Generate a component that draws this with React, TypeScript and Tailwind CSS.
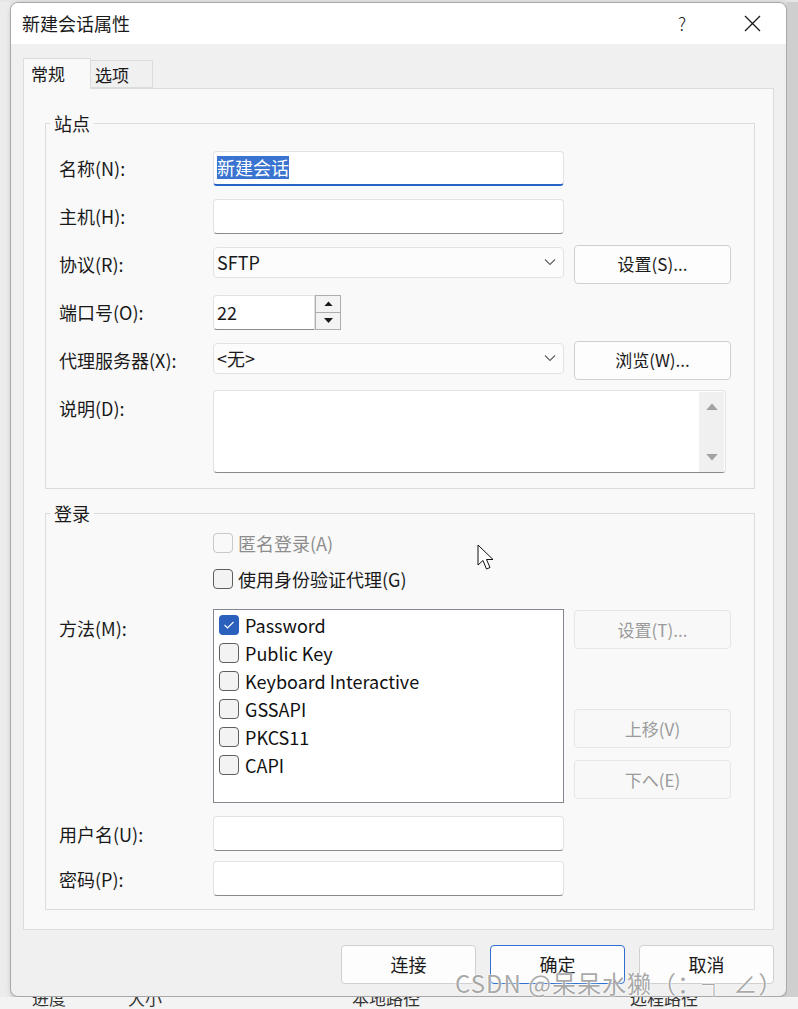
import type { ReactNode } from 'react'

// shared styles for the Win11-ish controls
const textBox = 'h-[35px] rounded-[4px] border border-[#e2e2e2] border-b-[#8a8a8a] bg-white'
const pushBtn = 'flex h-[39px] w-[157px] items-center justify-center rounded-[4px] border border-[#d0d0d0] bg-[#fdfdfd] text-[17px] text-[#1a1a1a]'
const pushBtnOff = 'flex h-[39px] w-[157px] items-center justify-center rounded-[4px] border border-[#e6e6e6] bg-[#f8f8f8] text-[17px] text-[#9a9a9a]'
const dlgBtn = 'flex h-[39px] w-[135px] items-center justify-center rounded-[4px] bg-[#fdfdfd] text-[18px]'

function Label({ children, className = '' }: { children: ReactNode; className?: string }) {
  return <div className={`w-[154px] shrink-0 text-[18px] leading-[24px] text-[#1a1a1a] ${className}`}>{children}</div>
}

function Row({ label, children }: { label: string; children: ReactNode }) {
  return (
    <div className="flex h-[48px] items-center">
      <Label>{label}</Label>
      {children}
    </div>
  )
}

function Chevron() {
  return (
    <svg width="12" height="8" viewBox="0 0 12 8" className="shrink-0">
      <polyline points="1,1.5 6,6.5 11,1.5" fill="none" stroke="#5f5f5f" strokeWidth="1.1" />
    </svg>
  )
}

function Combo({ value }: { value: string }) {
  return (
    <div className="mb-[4px] flex h-[31px] w-[351px] items-center justify-between rounded-[4px] border border-[#e2e2e2] bg-[#fcfcfc] pl-[3px] pr-[7px] text-[18px] text-[#1a1a1a]">
      <span>{value}</span>
      <Chevron />
    </div>
  )
}

function Tri({ up, color = '#1a1a1a', w = 9 }: { up?: boolean; color?: string; w?: number }) {
  return (
    <svg width={w} height={w / 2 + 1} viewBox="0 0 10 6">
      <polygon points={up ? '0,6 5,0.5 10,6' : '0,0 5,5.5 10,0'} fill={color} />
    </svg>
  )
}

function CheckBox({ checked, disabled }: { checked?: boolean; disabled?: boolean }) {
  if (checked) {
    return (
      <div className="flex h-[20px] w-[20px] shrink-0 items-center justify-center rounded-[4px] bg-[#2b60bd]">
        <svg width="12" height="10" viewBox="0 0 12 10">
          <polyline points="1.5,5 4.5,8 10.5,2" fill="none" stroke="#fff" strokeWidth="1.1" />
        </svg>
      </div>
    )
  }
  return (
    <div
      className={
        disabled
          ? 'h-[20px] w-[20px] shrink-0 rounded-[4px] border border-[#c9c9c9] bg-[#f9f9f9]'
          : 'h-[20px] w-[20px] shrink-0 rounded-[4px] border border-[#5e5e5e] bg-[#f3f3f3]'
      }
    />
  )
}

const METHODS = [
  { name: 'Password', checked: true },
  { name: 'Public Key' },
  { name: 'Keyboard Interactive' },
  { name: 'GSSAPI' },
  { name: 'PKCS11' },
  { name: 'CAPI' },
]

export default function App() {
  return (
    <div className="relative flex h-[1009px] w-[798px] flex-col overflow-hidden bg-[#e6e6e6] font-['Noto_Sans_CJK_SC','Noto_Sans',sans-serif] text-[#1a1a1a]">
      <div className="h-[2px] shrink-0" />
      <div className="flex shrink-0">
        <div className="w-[10px] shrink-0 bg-[#ececec]" />

        {/* dialog */}
        <div className="flex h-[995px] w-[777px] shrink-0 flex-col overflow-hidden rounded-[8px] border border-[#a8a8a8] bg-[#f0f0f0] shadow-[2px_2px_6px_rgba(0,0,0,0.25)]">
          <div className="flex h-[41px] shrink-0 items-center bg-white pl-[11px]">
            <span className="flex-1 text-[18px] text-[#1a1a1a]">新建会话属性</span>
            <div className="flex w-[46px] justify-center text-[18px] font-light text-[#2a2a2a]">?</div>
            <div className="ml-[24px] mr-[11px] flex w-[46px] justify-center">
              <svg width="17" height="17" viewBox="0 0 17 17">
                <path d="M1 1 L16 16 M16 1 L1 16" stroke="#1a1a1a" strokeWidth="1.3" />
              </svg>
            </div>
          </div>

          <div className="flex flex-1 flex-col px-[12px] pt-[14px]">
            {/* tabs */}
            <div className="flex items-end">
              <div className="relative z-10 -mb-px h-[31px] w-[68px] border border-b-0 border-[#dcdcdc] bg-[#f9f9f9] pl-[7px] pt-[2px] text-[17px] leading-[26px]">
                常规
              </div>
              <div className="h-[28px] w-[62px] border border-l-0 border-[#dcdcdc] bg-[#f0f0f0] pl-[4px] text-[17px] leading-[27px]">
                选项
              </div>
            </div>

            {/* tab panel */}
            <div className="flex h-[842px] flex-col gap-[12px] border border-[#dcdcdc] bg-[#f9f9f9] pl-[21px] pr-[18px] pt-[22px]">
              <fieldset className="border border-[#dcdcdc] pb-[15px] pl-[13px]">
                <legend className="-ml-[9px] px-[4px] text-[18px] leading-[24px]">站点</legend>
                <div className="pt-[9px]">
                  <Row label="名称(N):">
                    <div className={`${textBox} flex w-[351px] items-center border-b-2 border-b-[#2664c8] pl-[3px]`}>
                      <span className="bg-[#3a74d0] text-[18px] leading-[23px] text-white">新建会话</span>
                    </div>
                  </Row>
                  <Row label="主机(H):">
                    <div className={`${textBox} w-[351px]`} />
                  </Row>
                  <Row label="协议(R):">
                    <Combo value="SFTP" />
                    <div className={`${pushBtn} ml-[10px]`}>设置(S)...</div>
                  </Row>
                  <Row label="端口号(O):">
                    <div className={`${textBox} flex w-[102px] items-center rounded-r-none pl-[3px] text-[18px]`}>22</div>
                    <div className="flex h-[35px] w-[26px] flex-col border border-[#adadad] bg-[#ececec]">
                      <div className="flex flex-1 items-center justify-center border-b border-[#adadad] bg-[#f3f3f3]">
                        <Tri up />
                      </div>
                      <div className="flex flex-1 items-center justify-center bg-[#f3f3f3]">
                        <Tri />
                      </div>
                    </div>
                  </Row>
                  <Row label="代理服务器(X):">
                    <Combo value="<无>" />
                    <div className={`${pushBtn} ml-[10px]`}>浏览(W)...</div>
                  </Row>
                  <div className="mt-[6px] flex">
                    <Label className="mt-[6px]">说明(D):</Label>
                    <div className={`${textBox} flex h-[83px] w-[513px] justify-end pr-[1px] pt-[1px]`}>
                      <div className="flex h-[80px] w-[25px] flex-col items-center justify-between bg-[#f0f0f0] py-[11px]">
                        <Tri up color="#a3a3a3" w={12} />
                        <Tri color="#a3a3a3" w={12} />
                      </div>
                    </div>
                  </div>
                </div>
              </fieldset>

              <fieldset className="border border-[#dcdcdc] pb-[13px] pl-[13px]">
                <legend className="-ml-[9px] px-[4px] text-[18px] leading-[24px]">登录</legend>
                <div className="flex h-[36px] items-center pl-[154px]">
                  <CheckBox disabled />
                  <span className="ml-[5px] text-[18px] text-[#8d8d8d]">匿名登录(A)</span>
                </div>
                <div className="flex h-[36px] items-center pl-[154px]">
                  <CheckBox />
                  <span className="ml-[5px] text-[18px]">使用身份验证代理(G)</span>
                </div>

                <div className="mt-[12px] flex">
                  <Label className="mt-[7px]">方法(M):</Label>
                  <div className="flex h-[194px] w-[351px] flex-col border border-[#828790] bg-white pl-[5px] pt-[1px]">
                    {METHODS.map((m) => (
                      <div key={m.name} className="flex h-[28px] items-center gap-[6px]">
                        <CheckBox checked={m.checked} />
                        <span className="text-[18px] leading-[24px] text-[#111]">{m.name}</span>
                      </div>
                    ))}
                  </div>
                  <div className="ml-[10px] flex flex-col pt-[1px]">
                    <div className={pushBtnOff}>设置(T)...</div>
                    <div className={`${pushBtnOff} mt-[60px]`}>上移(V)</div>
                    <div className={`${pushBtnOff} mt-[12px]`}>下へ(E)</div>
                  </div>
                </div>

                <div className="mt-[13px] flex items-center">
                  <Label>用户名(U):</Label>
                  <div className={`${textBox} w-[351px]`} />
                </div>
                <div className="mt-[10px] flex items-center">
                  <Label>密码(P):</Label>
                  <div className={`${textBox} w-[351px]`} />
                </div>
              </fieldset>
            </div>

            {/* dialog buttons */}
            <div className="mt-[15px] flex justify-end gap-[14px]">
              <div className={`${dlgBtn} border border-[#d0d0d0]`}>连接</div>
              <div className={`${dlgBtn} border border-[#2f6fd0]`}>确定</div>
              <div className={`${dlgBtn} border border-[#d0d0d0]`}>取消</div>
            </div>
          </div>
        </div>

        <div className="flex-1 bg-[#cfcfcf]" />
      </div>

      {/* app behind the dialog, only its top edge peeks out */}
      <div className="flex h-[12px] shrink-0 overflow-hidden bg-[#f3f3f3] text-[17px] leading-[22px] text-[#333]">
        <span className="-mt-[10px] ml-[32px]">进度</span>
        <span className="-mt-[10px] ml-[62px]">大小</span>
        <span className="-mt-[10px] ml-[190px]">本地路径</span>
        <span className="-mt-[10px] ml-[210px]">远程路径</span>
      </div>

      {/* mouse pointer */}
      <svg className="absolute left-[477px] top-[544px]" width="19" height="28" viewBox="0 0 19 28">
        <path d="M1 1 L1 21 L6 16.5 L9.5 25 L13 23.5 L9.5 15.5 L16 15.5 Z" fill="#fff" stroke="#111" strokeWidth="1" strokeLinejoin="round" />
      </svg>

      {/* watermark */}
      <div className="absolute left-[455px] top-[967px] text-[24px] leading-[32px] tracking-[1px] text-[rgba(130,130,130,0.7)] [text-shadow:0_0_2px_#fff,0_0_2px_#fff]">
        CSDN @呆呆水獭（：┐ ∠）
      </div>
    </div>
  )
}
